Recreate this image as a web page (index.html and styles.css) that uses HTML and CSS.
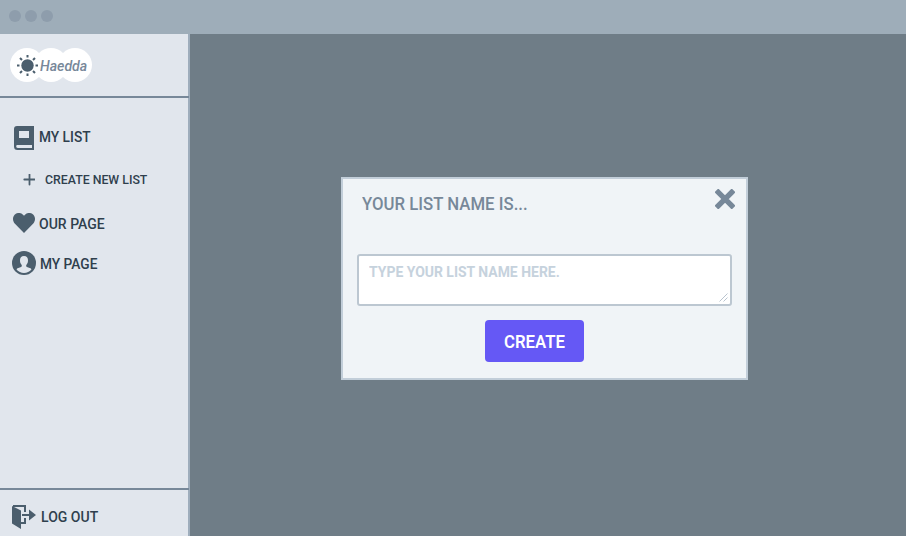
FILE: index.html
```html
<!DOCTYPE html>
<html lang="en">
<head>
<meta charset="utf-8">
<title>Haedda</title>
<link rel="stylesheet" href="styles.css">
</head>
<body>
<div class="window">
  <header class="titlebar"><i class="dot"></i><i class="dot"></i><i class="dot"></i></header>
  <div class="body">
    <aside class="sidebar">
      <div class="brand">
        <svg class="sun" width="34" height="34" viewBox="0 0 34 34"><circle cx="17.5" cy="17.5" r="6.2" fill="#4b5e6d"/><g stroke="#4b5e6d" stroke-width="2"><path d="M17.5 7v2.5M17.5 25.500v2.500M7 17.500h2.500M25.500 17.500h2.500M10 10l2 2M23 23l2 2M25 10l-2 2M12 23l-2 2"/></g></svg>
        <span class="circle"></span><span class="circle second"></span><span class="circle second"></span>
        <span class="name">Haedda</span>
      </div>
      <nav class="nav">
        <a class="item list"><svg width="20" height="24" viewBox="0 0 20 24"><path fill="#4b5e6d" fill-rule="evenodd" d="M3 0h17v24H3.500Q0 24 0 20.500V3Q0 0 3 0ZM5 5v7h10V5ZM3 19Q1.700 19.700 2.300 21q.3 .9 1.700.9H18V19Z"/></svg><span class="label l-list">MY LIST</span></a>
        <a class="item create"><svg width="12" height="12" viewBox="0 0 12 12"><path d="M6.500 .5v10M1.300 5.500h10.400" stroke="#4b5e6d" stroke-width="1.800" stroke-linecap="round"/></svg><span class="label l-create">CREATE NEW LIST</span></a>
        <a class="item our"><svg width="22" height="20" viewBox="0 0 22 20"><path fill="#4b5e6d" d="M11 20 1.700 10.400C-.5 8-.6 4 1.600 1.700 4-.7 7.700-.6 10 1.700l1 1 1-1C14.300-.6 18-.7 20.400 1.700 22.600 4 22.500 8 20.300 10.400Z"/></svg><span class="label l-our">OUR PAGE</span></a>
        <a class="item my"><svg width="24" height="24" viewBox="0 0 24 24"><circle cx="12" cy="12" r="12" fill="#4b5e6d"/><path fill="#e1e6ed" d="M12 5c2.700 0 4.200 1.800 4 4.500 0 1.800-.6 3.200-1.500 4.200-.5.700-.5 1.800.4 2.300l3.500 1.200c.8.300 1 .9.900 1.600C17.500 20.700 15 22 12 22s-5.500-1.300-7.300-3.200c-.1-.7.1-1.300.9-1.600L9.100 16c.9-.5.9-1.600.4-2.300C8.600 12.700 8 11.300 8 9.500 7.800 6.800 9.300 5 12 5Z"/></svg><span class="label l-my">MY PAGE</span></a>
      </nav>
      <a class="logout"><svg width="24" height="24" viewBox="0 0 24 24"><path d="M1 1h12v6M13 13v5H9M10 10h8" fill="none" stroke="#4b5e6d" stroke-width="2"/><path fill="#4b5e6d" d="M0 1 9 5.500V24L0 18.500ZM17 4.500 24 10l-7 5.500Z"/></svg><span class="label l-out">LOG OUT</span></a>
    </aside>
    <main class="backdrop">
      <section class="modal">
        <div class="heading"><span class="label title">YOUR LIST NAME IS...</span>
          <svg width="20" height="20" viewBox="0 0 20 20"><path d="M3.300 3.300l13.400 13.400M16.700 3.300L3.300 16.700" stroke="#778899" stroke-width="5.400" stroke-linecap="square"/></svg></div>
        <div class="field"><span class="label placeholder">TYPE YOUR LIST NAME HERE.</span>
          <svg width="9" height="9" viewBox="0 0 9 9"><path d="M.5 8.500l8-8M4.500 8.500l4-4" stroke="#b9c4cf" stroke-width="1"/></svg></div>
        <button class="submit"><span class="label cta">CREATE</span></button>
      </section>
    </main>
  </div>
</div>
</body>
</html>
```
FILE: styles.css
```css
* { box-sizing: border-box; }
body { margin: 0; font-family: Roboto, sans-serif; color: #2f3f4d; }
svg { display: block; flex: none; }
.window { width: 906px; height: 536px; overflow: hidden; display: flex; flex-direction: column; }
.titlebar { height: 34px; flex: none; background: #9eadb9; display: flex; gap: 4px; padding: 10px 9px; }
.dot { width: 12px; height: 12px; border-radius: 50%; background: #8e9dac; }
.body { flex: 1; display: flex; }
.sidebar { width: 190px; flex: none; background: #e1e6ed; border-right: 2px solid #9eadbc; display: flex; flex-direction: column; }
.brand { position: relative; height: 64px; flex: none; border-bottom: 2px solid #778899; padding: 14px 10px; display: flex; margin-right: -1px; }
.circle { width: 34px; height: 34px; border-radius: 50%; background: #fff; flex: none; }
.second { margin-left: -10px; }
.sun { position: absolute; left: 10px; top: 14px; z-index: 1; }
.name { position: absolute; z-index: 1; left: 40px; top: 22px; font-size: 15px; line-height: 20px; font-style: italic; font-weight: 500; color: #778899; transform-origin: left; transform: scaleX(.94); }
.label { display: inline-block; white-space: nowrap; font-weight: 500; transform-origin: left center; }
.nav { flex: 1; padding-top: 28px; }
.item { display: flex; align-items: center; font-size: 15px; line-height: 20px; }
.list { height: 24px; padding-left: 14px; gap: 5px; }
.list .label { margin-top: -2px; }
.create { height: 20px; margin-top: 20px; padding-left: 23px; gap: 10px; font-size: 12.500px; }
.our { height: 20px; margin-top: 23px; padding-left: 13px; gap: 4px; }
.our .label { margin-top: 2px; }
.my { height: 24px; margin-top: 18px; padding-left: 12px; gap: 4px; }
.my .label { margin-top: 1px; }
.logout { height: 48px; flex: none; border-top: 2px solid #778899; margin-right: -1px; padding: 15px 0 0 12px; display: flex; gap: 5px; font-size: 15px; line-height: 24px; }
.l-list, .l-my { transform: scaleX(.915); }
.l-our, .l-out { transform: scaleX(.935); }
.l-create { transform: scaleX(.985); }
.backdrop { flex: 1; background: #6f7d87; padding: 143px 0 0 151px; }
.modal { width: 407px; height: 203px; background: #f0f4f7; border: 2px solid #c2ced9; padding: 0 14px; }
.heading { height: 75px; display: flex; justify-content: space-between; padding: 10px 0 0 5px; margin-right: -4px; }
.heading svg { margin-right: 1px; }
.title { color: #778899; font-size: 18px; line-height: 30px; transform: scaleX(.932); }
.field { position: relative; width: 375px; height: 52px; background: #fff; border: 2px solid #bcc7d1; border-radius: 3px; padding: 6px 10px; }
.field svg { position: absolute; right: 2px; bottom: 2px; }
.placeholder { color: #c6d2dd; font-size: 15px; line-height: 20px; font-weight: 700; transform: scaleX(.93); }
.submit { display: block; width: 99px; height: 42px; margin: 14px 0 0 128px; padding: 2px 0 0 19px; border: 0; border-radius: 4px; background: #6558f5; color: #fff; text-align: left; font: 500 18px/22px Roboto, sans-serif; }
.cta { font-weight: 600; transform: scaleX(.93); }
```
